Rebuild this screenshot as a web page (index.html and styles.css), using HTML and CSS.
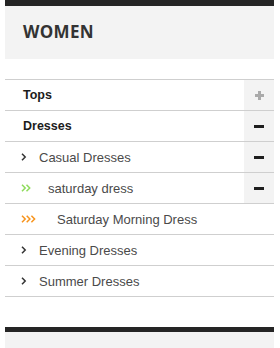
FILE: index.html
```html
<!DOCTYPE html>
<html>
<head>
<meta charset="utf-8">
<link rel="stylesheet" href="styles.css">
</head>
<body>
<div class="page">
  <div class="block">
    <div class="topbar"></div>
    <div class="block-head"><h2 class="title">WOMEN</h2></div>
  </div>
  <ul class="menu">
    <li class="row lvl0"><span class="label">Tops</span><span class="toggle"><span class="plus"></span></span></li>
    <li class="row lvl0"><span class="label">Dresses</span><span class="toggle"><span class="minus"></span></span></li>
    <li class="row lvl1"><span class="arrow a1"><svg width="6" height="8" viewBox="0 0 6 8"><path d="M1 0.8 L4.2 4 L1 7.2" fill="none" stroke="#333" stroke-width="1.5"/></svg></span><span class="label">Casual Dresses</span><span class="toggle"><span class="minus"></span></span></li>
    <li class="row lvl2"><span class="arrow a2"><svg width="11" height="8" viewBox="0 0 11 8"><path d="M1 0.8 L4.2 4 L1 7.2 M5.5 0.8 L8.7 4 L5.5 7.2" fill="none" stroke="#8fdc5c" stroke-width="1.5"/></svg></span><span class="label">saturday dress</span><span class="toggle"><span class="minus"></span></span></li>
    <li class="row lvl3"><span class="arrow a3"><svg width="16" height="8" viewBox="0 0 16 8"><path d="M1 0.8 L4.2 4 L1 7.2 M5.7 0.8 L8.9 4 L5.7 7.2 M10.4 0.8 L13.6 4 L10.4 7.2" fill="none" stroke="#f7941d" stroke-width="1.5"/></svg></span><span class="label">Saturday Morning Dress</span></li>
    <li class="row lvl1"><span class="arrow a1"><svg width="6" height="8" viewBox="0 0 6 8"><path d="M1 0.8 L4.2 4 L1 7.2" fill="none" stroke="#333" stroke-width="1.5"/></svg></span><span class="label">Evening Dresses</span></li>
    <li class="row lvl1"><span class="arrow a1"><svg width="6" height="8" viewBox="0 0 6 8"><path d="M1 0.8 L4.2 4 L1 7.2" fill="none" stroke="#333" stroke-width="1.5"/></svg></span><span class="label">Summer Dresses</span></li>
  </ul>
  <div class="block next">
    <div class="topbar small"></div>
    <div class="block-head short"></div>
  </div>
</div>
</body>
</html>
```
FILE: styles.css
```css
html, body { margin: 0; padding: 0; background: #fff; }
.page { margin: 0 6px 0 5px; }
.topbar { height: 6px; background: #252525; }
.topbar.small { height: 5px; }
.block-head { background: #f3f3f3; height: 53px; display: flex; align-items: center; padding-left: 18px; box-sizing: border-box; }
.block-head.short { height: 16px; }
.title { margin: 0; font-family: "Open Sans", sans-serif; font-weight: 700; font-size: 17px; letter-spacing: 0.3px; color: #333; line-height: 1; padding-bottom: 3px; }
.menu { list-style: none; margin: 20px 0 0; padding: 0; border-bottom: 1px solid #cfcfcf; }
.row { display: flex; align-items: center; height: 30px; border-top: 1px solid #cfcfcf; font-family: "Liberation Sans", Arial, sans-serif; font-size: 13px; color: #4a4a4a; }
.lvl0 .label { font-weight: 700; font-size: 12.5px; color: #1c1c1c; padding-left: 18px; }
.arrow { display: flex; align-items: center; padding-left: 16px; }
.arrow svg { display: block; margin-top: -1px; }
.a1 { width: 18px; }
.a2 { width: 27px; }
.a3 { width: 36px; }
.toggle { margin-left: auto; width: 30px; height: 30px; background: #f3f3f3; display: flex; align-items: center; justify-content: center; }
.minus { width: 10px; height: 3px; background: #1e1e1e; }
.plus { width: 9px; height: 9px; position: relative; }
.plus::before, .plus::after { content: ""; position: absolute; background: #aaa; }
.plus::before { left: 0; right: 0; top: 3px; height: 3px; }
.plus::after { top: 0; bottom: 0; left: 3px; width: 3px; }
.next { margin-top: 30px; }
```
